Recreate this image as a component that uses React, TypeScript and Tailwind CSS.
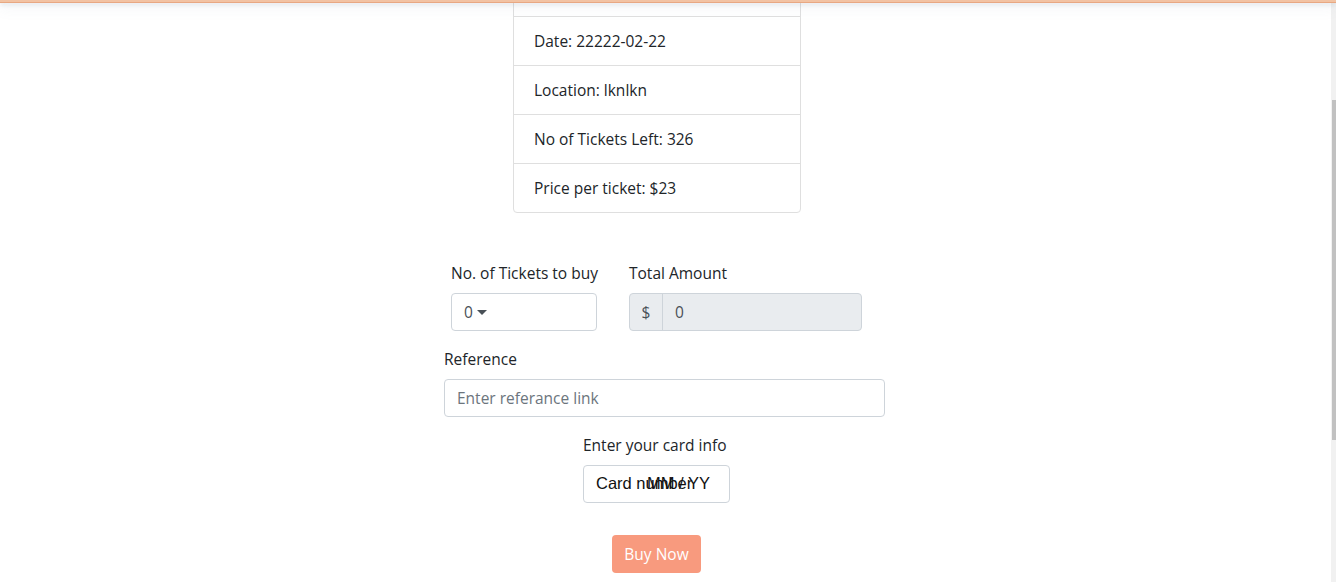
import { useState } from "react";

const rows = ["Type: typpy", "Date: 22222-02-22", "Location: lknlkn", "No of Tickets Left: 326", "Price per ticket: $23"];

export default function App() {
  const [qty] = useState(0);

  const font = { fontFamily: '"Open Sans", "Noto Sans", sans-serif' };

  return (
    <div className="flex h-[582px] overflow-hidden bg-white text-[#212529] text-[15.5px] leading-6" style={font}>
      {/* top navbar edge, sits over content */}
      <div className="fixed top-0 inset-x-0 h-[3px] bg-[#f2c3a3] border-b border-[#e8a882] shadow-[0_2px_4px_rgba(110,130,150,0.2),0_6px_12px_rgba(120,140,160,0.15)] z-10" />

      <div className="flex-1 flex flex-col">
        {/* Event details */}
        <div className="ml-[513px] -mt-[33px] w-[288px] border border-[#dfdfdf] rounded divide-y divide-[#dfdfdf]">
          {rows.map((r) => (
            <div key={r} className="px-5 py-3 whitespace-nowrap">{r}</div>
          ))}
        </div>

        {/* Purchase form */}
        <div className="mt-[48px] ml-[444px] w-[441px] flex flex-col">
          <div className="flex gap-8 pl-[7px]">
            <div className="w-[146px]">
              <label className="block mb-2 whitespace-nowrap">No. of Tickets to buy</label>
              <div className="h-[38px] border border-[#ced4da] rounded px-3 flex items-center text-[#495057]">
                {qty}
                <span className="ml-1 border-t-[5px] border-x-[5px] border-x-transparent border-t-[#495057]" />
              </div>
            </div>
            <div className="w-[233px]">
              <label className="block mb-2">Total Amount</label>
              <div className="h-[38px] flex border border-[#ced4da] rounded bg-[#e9ecef] text-[#495057]">
                <span className="w-[33px] flex items-center justify-center border-r border-[#ced4da]">$</span>
                <span className="flex items-center pl-3">0</span>
              </div>
            </div>
          </div>

          <label className="block mt-4 mb-2">Reference</label>
          <input
            className="h-[38px] border border-[#ced4da] rounded px-3 placeholder:text-[#6c757d] outline-none"
            placeholder="Enter referance link"
          />

          <div className="flex flex-col items-start mt-4 ml-[139px]">
            <span className="mb-2">Enter your card info</span>
            <div
              className="relative w-[147px] h-[38px] border border-[#ced4da] rounded text-[#111] text-[16.5px]"
              style={{ fontFamily: '"Liberation Sans", Arial, sans-serif' }}
            >
              <span className="absolute left-[12px] top-[5px]">Card number</span>
              <span className="absolute left-[63px] top-[5px]">MM / YY</span>
            </div>
            <button className="mt-8 ml-[29px] w-[89px] h-[38px] rounded bg-[#f89a7e] text-white">Buy Now</button>
          </div>
        </div>
      </div>

      {/* scrollbar */}
      <div className="w-[5px] bg-[#f1f1f1] pt-[100px]">
        <div className="h-[340px] bg-[#c1c1c1] ml-px" />
      </div>
    </div>
  );
}
